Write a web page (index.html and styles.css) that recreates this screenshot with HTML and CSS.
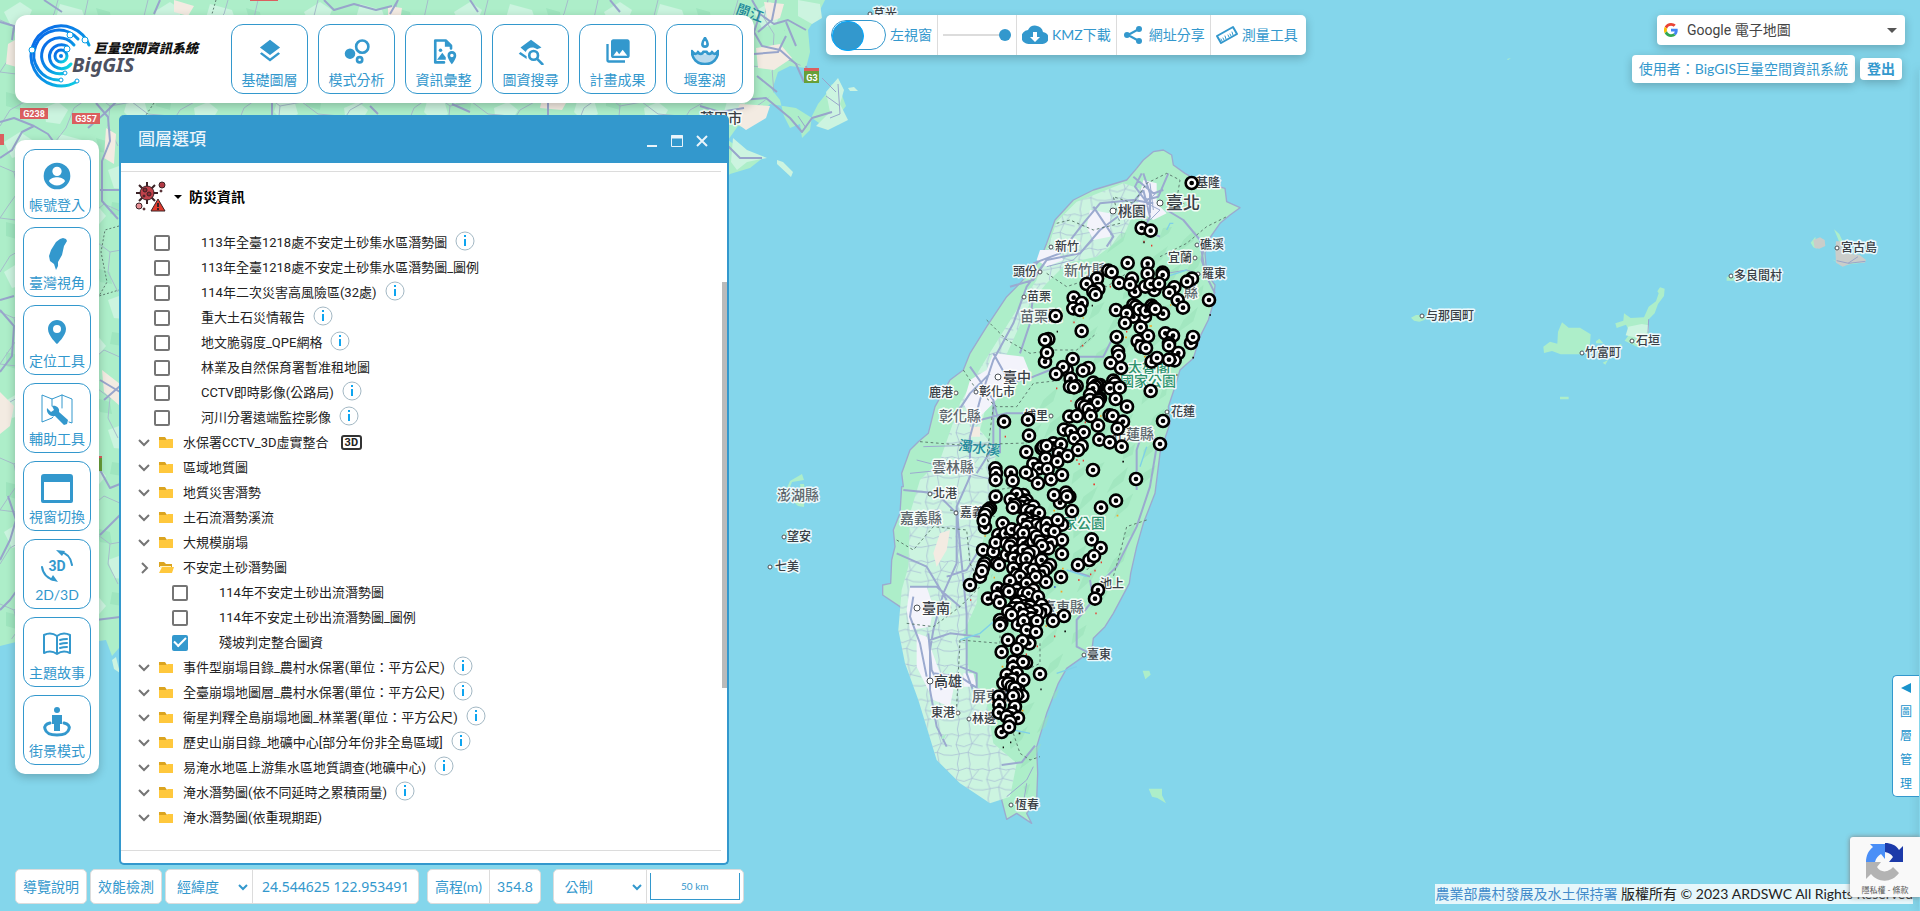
FILE: index.html
```html
<!DOCTYPE html>
<html lang="zh-Hant">
<head>
<meta charset="utf-8">
<meta name="viewport" content="width=device-width, initial-scale=1">
<title>BigGIS 巨量空間資訊系統</title>
<link rel="stylesheet" href="styles.css">
</head>
<body>
<main class="app">
  <svg class="map" viewBox="0 0 1920 911" preserveAspectRatio="xMidYMid slice" role="img" aria-label="電子地圖">
    <defs>
      <pattern id="hills" width="150" height="130" patternUnits="userSpaceOnUse">
        <path class="hill-light" d="M4 12l16-10 12 8-6 14-14 4zM60 4l22 6 4 12-18 6-12-10zM108 40l22-8 14 12-10 16-20-2zM22 62l20-6 8 14-16 12-14-6zM78 78l18-4 10 12-12 14-18-8zM128 98l16 2 4 14-14 8-10-10zM44 108l14-6 10 8-8 14-14-2z"/>
        <path class="hill-dark" d="M34 30l18-6 6 10-14 12zM96 8l14 4 2 12-12-2zM70 48l16-2 4 12-16 4zM6 92l16 4-2 14-14-4zM112 72l14 2-4 12-12-2z"/>
      </pattern>
      <pattern id="minor" width="170" height="146" patternUnits="userSpaceOnUse">
        <path class="road-minor" d="M0 20l14 6 10-8 16 10 8 18 18 4 6 16 20 2 12-10 18 8 14-4 12 8 22-6M40 28l14-14 4-14M66 50l-14 22-18 6-6 22-18 10-10 16M92 68l2 26 16 12-2 20 10 20M142 62l8-20-8-18 6-24M94 94l-20 14-8 20-14 18M0 72l16 2 18 4M110 106l22-4 16 12 22 2M122 66l8 20 2 16M14 26l4 20-10 14-8 12M88 0l-4 18 10 16-2 34"/>
      </pattern>
      <pattern id="lanes" width="92" height="104" patternUnits="userSpaceOnUse">
        <path class="road-minor" d="M0 14l20 6 24-8 26 6 22-4M20 20l-8 26 10 28-6 30M20 20L16 0M52 13l8 30-12 26 6 35M52 13l2-13M12 46l24 6 24-9 32 8M0 78l22-4 26-5 20 8 24 1M60 43l20-25"/>
      </pattern>
      <pattern id="ridge" width="210" height="240" patternUnits="userSpaceOnUse">
        <path class="ridge" d="M10 40l40-26-10 30-36 30zM70 20l34-14-18 34-30 20zM130 60l44-40-14 44-50 36zM40 110l44-32-18 40-46 40zM150 130l40-30-16 40-44 38zM80 160l46-30-24 46-42 30zM10 210l40-30-12 34-28 22zM160 220l36-30-8 34-30 14z"/>
      </pattern>
    </defs>
    <rect class="sea" width="1920" height="911"/>

    <g>
      <path class="land" d="M0 0H825L818 14 808 30 810 52 806 68 790 66 778 72 772 90 780 100 784 116 790 128 800 124 802 138 810 130 812 116 818 104 826 94 832 84 840 90 846 106 838 116 840 124 826 128 812 118 796 108 770 104 756 118 748 128 738 126 728 140 742 150 764 157 750 168 730 174 600 300 400 450 200 600 119 648 112 656 106 640 92 642 60 630 40 636 0 646z"/>
      <path class="fill-hills" d="M0 0H790L780 60 740 110 720 130 400 420 119 620 0 636z"/>
      <path class="fill-minor" d="M0 0H800L806 60 740 126 500 380 119 630 0 640z"/>
      <path class="town" d="M8 44l14-8 8 14-10 18-14-4zM106 128l10 6-2 30-10-6zM0 392l14 14-4 20-10 8zM102 370l18 14v22l-16-14zM740 104l30 2-4 12-20 12-14-10zM756 48l24-4 12 14-18 12-16-2zM764 2l20 2-4 14-12 4zM388 6l14 2-2 14-12-4zM544 90l26 6-8 14-22-2zM174 0l20 6-6 10-14-4z"/>
      <path class="land-light" d="M826 92l12-14 6 12-4 14 8 16-20 10-12-4 14-14zM777 160l6 2 10 10-2 5-14-13zM733 138l14 12 20 8-20 4-10 8-6-8zM848 88l6-1 4 4-8 0zM112 660l4-3 4 16-6-4zM798 0l22 4 2 14-10 6-14-8z"/>
      <g class="road-major">
        <path d="M0 158l12-8 10-18 12-6 14 8 10 14M34 126l-20-8-14 4M96 103l12 14 2 24-8 20 0 40 16 18M88 128l16-14 12-12M100 190l20 0M0 372l12-16 2-30-14-16M0 560l10-20 6-20-8-24M0 300l14-4M100 380l20 12M104 400l16-14M100 470l10 18 10-4M100 535l20-20M96 620l24-3M0 610l10-10 10-14M0 22l14 4-2 14"/>
        <path d="M44 0l18 12M154 14l6-14M324 0l10 10 20-6 22 6 16-4M470 0l8 12M610 0l10 12M390 14l8-14"/>
        <path d="M752 0l8 14 14 10 14-4 18 10M760 14l-6 18 8 14 18 4 16 14 8 18M776 0l-4 20-14 12M786 22l10 24M754 54l24-2 8-16M740 100l26-2 24 20 12 14 10-14 20-6M757 76l20 16M806 66l2 10M728 146l12 12 22 0M700 106l20 6 24-4M370 106l8 8M272 103v12M548 103v12M452 104l18 8"/>
      </g>
      <path class="boundary" d="M216 0l-4 14M154 103l-8 12M119 226l-14 4-4 22 6 30-8 14 20-6"/>
      <g class="road-major thin"><path d="M826 96l14 10M838 84l2 30-10 4M822 78l14 14M798 116l8 12"/></g>
    </g>

    <svg x="860" y="140" width="400" height="720" viewBox="0 0 1200 2160" class="spill">
      <path class="land coast" d="M910 30l25 15 5 30 35 25 35 20 85 25 5 40 40 18-30 22-30 25-35 50-10 40 5 60 25 35-5 55-15 50-25 50-20 65-40 35-15 50-20 60 5 50-30 90-15 120-35 90-20 70-18 80-4 30-48 90-25 40-35 35-3 25-27 30-50 35-25 45-35 90-30 100 3 80-3 80-30 40 15 30-45-30-30 18-15-58 10-40-10-65-40-75-25-35-60-35-60-40-45-50-15-60-25-80-13-60-22-40-52-35v-30l24-5 3-70 10-40-5-50 20-50 5-80 5 0-5-40 25-70 25-25 30-25 20-80 45-80 40-30 20-50 50-80 60-90 40-40 60-70 20-50 25-70 55-60 60-30 100-30 30-35 20-25 30-25z"/>
      <path class="land-light" d="M590 245l60-60 140-55 60 20-30 70-30 70-80 60-90 20-60 60-50 60-60 130-60 130-30 120 50 60-20 120-30 220-10 120-40 90 20 130 50 80 20 120 70 60-20 100-60 20-90-60-70-70-55-180-40-110-20-100 10-120 20-70 5-160 30-100 60-60 60-170 70-120 100-160 60-90z"/>
      <path class="fill-lanes" d="M590 245l60-60 140-55 60 20-30 70-30 70-80 60-90 20-60 60-50 60-60 130-60 130-30 120 50 60-20 120-30 220-10 120-40 90 20 130 50 80 20 120 70 60-20 100-60 20-90-60-70-70-55-180-40-110-20-100 10-120 20-70 5-160 30-100 60-60 60-170 70-120 100-160 60-90z"/>
      <path class="fill-ridge" d="M940 260l90 20 0 160-30 160-80 150-20 170-60 260-80 180-120 170-80 220-60 220-60-180-30-260-20-260 60-300 60-180 100-180 80-200 90-130z"/>
      <path class="urban" d="M850 120l40 10 0 60 30 30-40 20-50-30 10-50zM690 210l60 10 0 70-50 10-20-40zM400 640l90 10 20 50-60 30-50 60-60 60-30-60 20-70 50-30zM150 1340l50 0 20 60-10 60-60 10-10-60zM170 1480l30 10 40 110 40 50-10 50-50-20-50-100zM540 330l50 0 20 30-50 20-30-20zM310 1600l30 0 10 40-40 0z"/>
      <path class="town" d="M240 1180l30-10-10 60-30 50-10-40zM620 1060l20-10 10 20-20 10zM330 860l30 0 0 30-30 0z"/>
      <g class="road-taiwan">
        <path d="M850 150l-50 60-80 60-60 70-100 20-60 80-40 110-60 110-40 120-30 110 0 120-40 90 0 170-40 90-30 110-10 60 0 120 20 110 30 60M880 190l-60-10-100 10-50 60-70 90-80 30M700 200l60 90-20 30M850 150l20 80-20 40 50 20M920 210l50 30 50 60 15 100M400 640l50 90 70-20 50-20 90-40 70 0 30-60M330 680l70 100 20 80 0 80M390 700l-60 60-40 60M400 780l0 140-50 80M520 820l-80 0-80 20M480 640l30-90 10-90M290 1100l10 120 20 200 0 180 30 80M160 1370l-10 60 30 80 20 100M150 1340l80 0 70 60M210 1500l60-20 90 10M870 860l20 60-20 120-40 120-60 120-60 60M690 1320l10 60-50 60 0 80 40 20M850 100l20 60 0 60M820 110l60 50 30-10M780 210l50 0 40-20M630 1290l60 20M130 1050l100 10 60 60M110 1240l90 40 60 100M205 1480l10 110 30 60M260 1310l60-20 50-80M300 1580l50 20 0 60M220 1600l80 10 60 40M450 440l70-20 40-60M850 870l-20 60 0 120M425 1875l60-8 40-50M1035 300l-10 60 20 60 20 40M845 100l-20 40 30 40 40-10 30-70"/>
        <path class="faint" d="M510 980l60-40 90-20M560 380l80-20 60-60M920 400l60-10 60 20M520 1880l-20 40-60 50M500 1930l-10 60M190 920l210-6M170 960l230 60M150 1000l100-10M860 190l40 20-30 30-40-10M840 200l60-50M870 130l10 80"/>
      </g>
      <path class="boundary taiwan" d="M590 250l40-10 70 30 80-20-20-80 60 20 40-60 60-30 40 20-10 60 40 20M900 350l80-40 60-50 60-30M560 400l60 40 60-20 60 20 60-40M380 540l60 60 70 40 70-10 70 0 60-50M310 690l40 60 60 50 60 0 50-70 90-10M180 905l120 10 200-6M400 800l-20 150 30 100 60-10 0 60M270 1110l60 10 80 10M110 1200l50 30 60-70 100 10 10 100 30 60M140 1450l80 10 80-60 60-60M290 1700l10-200 120 10 0-30M860 1140l-60 20-20 80-20 70M540 1510l0 60-40 20M460 1780l20 60 30 20 30-10M680 1290l20-20 0-30"/>
      <path class="stream" d="M920 270l10-20 10 0M300 1500l60-20 70-60M620 1290l60 20M590 1600l60-20M840 980l20-60M920 410l60-20M460 1770l50 10"/>
      <path class="land" d="M848 1592h20l4 12-16 14zM866 1946h40v20l12 24-26-16-16-4zM244 1790l14-8-4 12-8 4z"/>
      <path class="spot-red" d="M850 305h4M873 317h4M749 440h4M640 547h4M666 617h4M588 745h4M631 783h4M674 847h4M434 890h4M648 960h5M655 972h5M668 962h4M700 1033h5M389 1135h3M636 1157h4M722 1267h4M703 1292h4M654 1320h5M706 1420h4M582 1489h4M530 1519h4M330 1380h4M497 1543h4M798 575h4M997 170h4M690 1303h4"/>
      <path class="spot-yellow" d="M868 558h8M852 650h5M795 592h6M668 534h4M720 828h5M770 1127h5M425 1580h5M556 1458h5M602 1355h5M373 1188h5M401 1313h4M606 1286h5M930 495h4M485 1712h5M580 1112h5"/>
      <path class="spot-blue" d="M724 1149h5M582 1341h5"/>
      <path class="spot-black" d="M590 575h4M787 965h5M1048 525h5M997 653h5M948 705h4M541 1648h4M476 1780h5M450 1807h4M428 1822h4M613 1474h5M850 307h4M695 497h4"/>
    </svg>

    <svg x="1380" y="200" width="520" height="200" viewBox="0 0 1560 600" class="spill">
      <path class="land" d="M93 353l15-8h24l4 14-18 6-16-3zM490 440l20-15 22 6 2-36 12-28 20 16 34 0 32 20-2 28-28 32-60 0-26-10-24 6zM840 262l14 4-2 22-18 24-10 28-20 20 0 28 4 34-34 20-40-20 16-22-12-26-28 10-4-14 24-8 2-22 20 14 40-2 14-32 22-16 8-24-4-6zM648 424l10-8 12 14-22 0zM668 488l16-8-8 14zM1040 232l20-12 6 22-26 0zM1362 88l16 14 10 22-10 2zM1292 128l14-18 4 36-10-4zM540 590h26v8h-26zM1356 178l14 6 80 0 10-8-14 12-60 8zM718 432h6v6h-6z"/>
      <path class="land-light" d="M745 380l40-8 22 4 0 18-34 20-36-8z"/>
      <path class="island-urban" d="M1300 120l20-8 14 8 2 18-18 8-14-2zM1368 124l16 0 4 36 50 4 20 16-4 8-36 0-30 12-20-12-2-40z"/>
      <path class="road-major wide3" d="M1370 182l36 8 50-6M1404 190l30-20M806 358l-2 40"/>
    </svg>

    <path class="land" d="M786 490l4-9 12-7 2 6-12 2-4 10zM800 484l4 0 2 14-4-2zM792 500h12l0 7-6-1zM783 534l4-1-2 3zM1507 59l4-1-3 2z"/>

    <g class="places" id="places"></g>
    <g class="shields">
      <g class="shield-red"><rect x="20" y="108" width="28" height="11"/><rect x="72" y="113" width="28" height="11"/><rect x="-10" y="134" width="14" height="11"/><rect x="250" y="-8" width="28" height="9"/><rect x="804" y="68" width="15" height="4"/><rect x="96" y="456" width="6" height="6"/></g>
      <g class="shield-green"><rect x="804" y="71" width="15" height="12"/><rect x="96" y="458" width="6" height="13"/></g>
      <text x="34" y="117">G238</text><text x="86" y="122">G357</text><text x="812" y="81">G3</text>
    </g>
    <svg x="860" y="140" width="400" height="720" viewBox="0 0 1200 2160" class="spill" id="markers"></svg>
  </svg>

  <header class="topbar card">
    <a class="logo" href="#" aria-label="BigGIS 巨量空間資訊系統">
      <svg width="180" height="68" viewBox="0 0 180 68">
        <defs><linearGradient id="ring" x1="0" y1="0" x2="1" y2="1"><stop offset="0" stop-color="#0a63e8"/><stop offset=".55" stop-color="#0a8fe6"/><stop offset="1" stop-color="#0fe6e0"/></linearGradient></defs>
        <g fill="none" stroke="url(#ring)" stroke-width="3" stroke-linecap="round">
          <path d="M61 24A30 30 0 1 0 48 61"/>
          <path d="M50 18A25 25 0 1 0 33 59"/>
          <path d="M46 24A18 18 0 1 0 37 52"/>
          <path d="M39 25A12 12 0 1 0 43 43"/>
          <circle cx="33" cy="35" r="6"/>
        </g>
        <circle cx="33" cy="35" r="2" fill="#0a7fe6"/>
        <g fill="#fff" stroke="#0a9fe6" stroke-width="1"><circle cx="42" cy="14" r="3"/><circle cx="57" cy="19" r="3"/><circle cx="4" cy="29" r="3"/><circle cx="39" cy="28" r="3"/><circle cx="37" cy="52" r="2"/><circle cx="33" cy="59" r="2"/><circle cx="49" cy="60" r="2"/></g>
        <text class="logo-cjk" x="66" y="32">巨量空間資訊系統</text>
        <text class="logo-latin" x="44" y="51">BigGIS</text>
      </svg>
    </a>
    <nav class="topnav" aria-label="主功能">
      <button class="tool"><svg class="icon" viewBox="0 0 32 32"><path d="M16 3 4.500 12 16 20.500 27.500 12zM16 24.500 6.500 17.300 4.500 19 16 28 27.500 19 25.500 17.300z"/></svg><span>基礎圖層</span></button>
      <button class="tool"><svg class="icon" viewBox="0 0 32 32"><circle cx="8" cy="19" r="6"/><g class="line w3"><circle cx="22" cy="11" r="7"/><circle cx="19" cy="26" r="3"/></g></svg><span>模式分析</span></button>
      <button class="tool"><svg class="icon" viewBox="0 0 32 32"><path class="line w3" d="M16 29H6V4h12l6 6v3"/><path d="M17 4v7h7zM8 26l6-8 4 5v3z"/><circle cx="12" cy="15" r="2"/><path d="M25 16c-3 0-5 2-5 5 0 4 5 10 5 10s5-6 5-10c0-3-2-5-5-5zm0 7a2 2 0 1 1 0-4 2 2 0 0 1 0 4z"/></svg><span>資訊彙整</span></button>
      <button class="tool"><svg class="icon" viewBox="0 0 32 32"><path d="M16 3 4 12l6 5c2-5 8-7 13-3l5-2zM4 17l7 5v3l-9-6z"/><circle class="line w3" cx="19" cy="21" r="5"/><path class="line w3" d="m23 25 6 6"/></svg><span>圖資搜尋</span></button>
      <button class="tool"><svg class="icon" viewBox="0 0 24 24"><path d="M22 16V4c0-1.100-.9-2-2-2H8c-1.100 0-2 .9-2 2v12c0 1.100.9 2 2 2h12c1.100 0 2-.9 2-2zm-11-4 2 2.700L16 11l4 5H8l3-4zM2 6v14c0 1.100.9 2 2 2h14v-2H4V6H2z"/></svg><span>計畫成果</span></button>
      <button class="tool"><svg class="icon" viewBox="0 0 32 32"><path class="soft" d="M2 19l5 1 4-2 5 2 5-2 4 2 5-1c0 6-5 12-14 12S2 25 2 19z"/><path class="line w3" d="M1 16c0 9 6 15 15 15s15-6 15-15M2 17c2 3 5 3 6 0 1 3 5 3 6 0h4c1 3 5 3 6 0 1 3 4 3 6 0"/><path class="line w3" d="M16 1c-2 3-3 5-3 7a3 3 0 0 0 6 0c0-2-1-4-3-7z"/></svg><span>堰塞湖</span></button>
    </nav>
  </header>

  <nav class="sidebar card" aria-label="工具列">
    <button class="tool"><svg class="icon" viewBox="0 0 24 24"><path d="M12 2a10 10 0 1 0 0 20 10 10 0 0 0 0-20zm0 3a3.500 3.500 0 1 1 0 7 3.500 3.500 0 0 1 0-7zm0 14.200c-2.500 0-4.700-1.300-6-3.200 0-2 4-3.100 6-3.100s6 1.100 6 3.100c-1.300 1.900-3.500 3.200-6 3.200z"/></svg><span>帳號登入</span></button>
    <button class="tool"><svg class="icon" viewBox="0 0 32 32"><path d="M22 0l3 1 1 2-3 5-2 9-4 7 0 4-2 4-2-6-4-3-1-5 2-6 5-8 4-3z"/></svg><span>臺灣視角</span></button>
    <button class="tool"><svg class="icon" viewBox="0 0 32 32"><path d="M16 4c-5 0-9 4-9 9 0 7 9 15 9 15s9-8 9-15c0-5-4-9-9-9zm0 13a4 4 0 1 1 0-8 4 4 0 0 1 0 8z"/></svg><span>定位工具</span></button>
    <button class="tool"><svg class="icon" viewBox="0 0 32 32"><path class="line" d="M12 23l-1 1-10 4V1l10 4 10-4 10 4v24l-3-1M11 5v7M21 1v13"/><path d="M6 14l4 4 3-2-2-4c4-1 8 2 7 6l9 8-1 4-3 1-9-9c-5 1-9-3-8-8z"/></svg><span>輔助工具</span></button>
    <button class="tool"><svg class="icon" viewBox="0 0 32 32"><path d="M3 2h26a3 3 0 0 1 3 3v24a2 2 0 0 1-2 2H2a2 2 0 0 1-2-2V5a3 3 0 0 1 3-3zm0 8v18h26V10z"/></svg><span>視窗切換</span></button>
    <button class="tool"><svg class="icon" viewBox="0 0 32 32"><path class="line w2" d="M19 2c7 1 11 6 12 13M1 17c1 7 6 12 13 13"/><path d="M15 0l9 1-3 5zM17 32l-8-2 3-5z"/><text class="icon-text" x="16" y="21">3D</text></svg><span>2D/3D</span></button>
    <button class="tool"><svg class="icon" viewBox="0 0 32 32"><path class="line w2" d="M16 8C12 5 7 5 3 7v18c4-2 9-2 13 1 4-3 9-3 13-1V7c-4-2-9-2-13 1zM16 8v18M19 12c3-1 5-1 7-1M19 16c3-1 5-1 7-1M19 20c3-1 5-1 7-1"/></svg><span>主題故事</span></button>
    <button class="tool"><svg class="icon" viewBox="0 0 32 32"><circle cx="16" cy="4" r="3"/><path d="M11 9h10v9h-2v7h-6v-7h-2z"/><path class="line w3" d="M9 17c-4 1-6 3-5 6 1 4 6 6 12 6s11-2 12-6c1-3-1-5-5-6"/></svg><span>街景模式</span></button>
  </nav>

  <div class="viewbar card">
    <label class="viewbar-cell switch"><input type="checkbox"><span>左視窗</span></label>
    <div class="viewbar-cell range"><input type="range" min="0" max="100" value="100" aria-label="透明度"></div>
    <button class="viewbar-cell"><svg width="26" height="26" viewBox="0 0 26 26"><path d="M21 10A8 8 0 0 0 6 8a7 7 0 0 0 1 14h13a6 6 0 0 0 1-12zm-8 10-5-5h3v-5h4v5h3z"/></svg><span>KMZ下載</span></button>
    <button class="viewbar-cell"><svg class="share" width="20" height="20" viewBox="0 0 20 20"><path class="line w2" d="M16 4 5 10l11 6"/><circle cx="16" cy="4" r="3"/><circle cx="4" cy="10" r="3"/><circle cx="16" cy="16" r="3"/></svg><span>網址分享</span></button>
    <button class="viewbar-cell"><svg width="22" height="22" viewBox="0 0 22 22"><path class="line w2" d="M1 12 17 3l4 7-16 9z"/><path class="line" d="M6 17l-1-2M8 16l-1-2M10 15l-1-3M13 13l-1-2M15 12l-1-2M17 11l-1-3"/></svg><span>測量工具</span></button>
  </div>

  <div class="corner">
    <label class="basemap card">
      <svg width="14" height="14" viewBox="0 0 48 48"><path fill="#ea4335" d="M24 9.500c3.500 0 6.700 1.200 9.200 3.600l6.900-6.900C35.900 2.400 30.500 0 24 0 14.600 0 6.500 5.400 2.600 13.200l8 6.200C12.400 13.700 17.700 9.500 24 9.500z"/><path fill="#4285f4" d="M47 24.600c0-1.600-.2-3.100-.4-4.600H24v9h12.900c-.6 3-2.300 5.500-4.800 7.200l7.700 6C44.400 38 47 32 47 24.600z"/><path fill="#fbbc05" d="M10.500 28.600a14.500 14.500 0 0 1 0-9.200l-8-6.200a24 24 0 0 0 0 21.600z"/><path fill="#34a853" d="M24 48c6.500 0 11.900-2.100 15.900-5.800l-7.700-6c-2.200 1.500-4.900 2.300-8.200 2.300-6.300 0-11.600-4.200-13.500-9.900l-8 6.200C6.500 42.600 14.600 48 24 48z"/></svg>
      <select aria-label="底圖"><option>Google 電子地圖</option></select>
      <svg class="caret" width="10" height="5" viewBox="0 0 10 5"><path d="M0 0h10L5 5z"/></svg>
    </label>
    <div class="user">
      <span class="user-name card">使用者：BigGIS巨量空間資訊系統</span>
      <button class="logout card">登出</button>
    </div>
  </div>

  <section class="window" aria-labelledby="win-title">
    <header class="window-head">
      <h1 id="win-title">圖層選項</h1>
      <div class="window-controls">
        <button aria-label="最小化"><svg width="12" height="14" viewBox="0 0 12 14"><path d="M1 12h10" stroke-width="2"/></svg></button>
        <button aria-label="最大化"><svg width="12" height="14" viewBox="0 0 12 14"><path d="M.5 1.500h11v11H.5zM0 3h12" /><path d="M0 3h12" stroke-width="3"/></svg></button>
        <button aria-label="關閉"><svg width="12" height="14" viewBox="0 0 12 14"><path d="M1 2l10 10M11 2 1 12" stroke-width="2"/></svg></button>
      </div>
    </header>
    <div class="window-body">
      <div class="layer-group">
        <h2 class="group-title">
          <svg width="32" height="32" viewBox="0 0 32 32"><g stroke="#3a2226" stroke-width="1"><path d="M12 1v22M1 12h22M4 4l16 16M20 4 4 20" stroke-width="2"/><circle cx="12" cy="12" r="7" fill="#c0424b"/><circle cx="10" cy="9" r="2" fill="#8c2b34"/><circle cx="14" cy="13" r="2" fill="#8c2b34"/><circle cx="9" cy="15" r="1" fill="#8c2b34"/><circle cx="27" cy="4" r="3" fill="#b23a44"/><circle cx="26" cy="10" r="1" fill="#b23a44"/><circle cx="4" cy="25" r="3" fill="#e88f95"/><circle cx="9" cy="28" r="1" fill="#b23a44"/><path d="M23 18l7 12H16z" fill="#e03a2c"/></g><path d="M23 22v4M23 27v2" stroke="#3a2226" stroke-width="2"/></svg>
          <svg class="caret" width="8" height="4" viewBox="0 0 8 4"><path d="M0 0h8L4 4z"/></svg>
          <span>防災資訊</span>
        </h2>
        <ul class="layers" id="layers"></ul>
      </div>
    </div>
    <div class="window-scroll"></div>
  </section>

  <footer class="statusbar">
    <button class="pill">導覽說明</button>
    <button class="pill">效能檢測</button>
    <div class="pill joined coords">
      <span class="picker"><select aria-label="座標系統"><option>經緯度</option></select><svg width="10" height="7" viewBox="0 0 10 7"><path d="M1 1l4 4 4-4"/></svg></span>
      <input class="coord" type="text" value="24.544625 122.953491" aria-label="座標">
    </div>
    <div class="pill joined height"><span>高程(m)</span><output>354.8</output></div>
    <div class="pill joined units">
      <span class="picker"><select aria-label="單位"><option>公制</option></select><svg width="10" height="7" viewBox="0 0 10 7"><path d="M1 1l4 4 4-4"/></svg></span>
      <span class="scale-box"><span class="scale">50 km</span></span>
    </div>
  </footer>

  <p class="credit"><a href="#">農業部農村發展及水土保持署</a> 版權所有 © 2023 ARDSWC All Rights Reserved</p>

  <div class="edge"></div>
  <button class="edge-tab"><svg width="10" height="10" viewBox="0 0 10 10"><path d="M0 5l10-5v10z"/></svg><span>圖</span><span>層</span><span>管</span><span>理</span></button>

  <aside class="recaptcha">
    <svg width="38" height="38" viewBox="0 0 38 38"><path fill="#1c3aa9" d="M19 0c6 0 11 2 14 7l4-4v16H23l4-5c-2-3-4-4-8-5z"/><path fill="#4a8ff7" d="M0 19C0 12 3 7 7 4L4 1h15v15l-4-5c-3 2-5 4-6 8z"/><path fill="#b3b3b3" d="M0 19h15l-4 5c2 4 8 6 12 3 1 0 3-2 4-3l6 6c-7 10-21 10-28 1l-5 5z"/></svg>
    <span><a href="#">隱私權</a> - <a href="#">條款</a></span>
  </aside>
</main>
<script src="app.js"></script>
</body>
</html>
```

FILE: styles.css
```css
:root {
  --blue: #3398cd;
  --line: #dcdcdc;
  --ui: Lato, "Noto Sans CJK TC", sans-serif;
  --list: Roboto, "Noto Sans CJK TC", sans-serif;
}

* { box-sizing: border-box; }

body {
  margin: 0;
  font: 14px/20px var(--ui);
  color: #222;
}

button, input, select { font: inherit; color: inherit; }
button { border: 0; background: none; padding: 0; cursor: pointer; }
a { text-decoration: none; }
svg { flex: none; }

.app {
  position: relative;
  height: 100vh;
  overflow: hidden;
  background: #84d6eb;
}

.card {
  background: #fff;
  box-shadow: 0 3px 10px rgba(0, 0, 0, .22);
}

/* Map */
.map { display: block; width: 100%; height: 100%; }
.spill { overflow: visible; }
.sea { fill: #84d6eb; }
.land { fill: #adeec9; }
.coast { stroke: #9baacf; stroke-width: 4; stroke-linejoin: round; }
.land-light { fill: #ccf4e0; }
.fill-hills { fill: url(#hills); }
.fill-minor { fill: url(#minor); }
.fill-lanes { fill: url(#lanes); }
.fill-ridge { fill: url(#ridge); }
.hill-light { fill: #cbf4df; }
.hill-dark { fill: #9fe6bf; }
.ridge { fill: #98dfb8; fill-opacity: .5; }
.town { fill: #f3ebe2; }
.urban { fill: #f3f3fb; }
.island-urban { fill: #cacdca; }
.road-minor { fill: none; stroke: #a5bccb; stroke-width: 1; }
#lanes .road-minor { stroke: #a3b4d2; stroke-width: 2; }
.road-major { fill: none; stroke: #98a5cb; stroke-width: 2; stroke-linejoin: round; }
.road-major.thin { stroke-width: 1; }
.road-major.wide3 { stroke-width: 3; }
.road-taiwan { fill: none; stroke: #9baacf; stroke-width: 6; stroke-linejoin: round; }
.road-taiwan .faint { stroke-width: 3; }
.boundary { fill: none; stroke: #5f7f72; stroke-width: 1; stroke-dasharray: 2 2; }
.boundary.taiwan { stroke-width: 3; stroke-dasharray: 8 8; }
.stream { fill: none; stroke: #7fd0e8; stroke-width: 4; }
.spot-red, .spot-yellow, .spot-blue, .spot-black { stroke-width: 5; }
.spot-red { stroke: #e83b2c; }
.spot-yellow { stroke: #f5a623; }
.spot-blue { stroke: #2b62e0; }
.spot-black { stroke: #111; }

.places text {
  font-family: Roboto, "Noto Sans CJK TC", sans-serif;
  font-weight: 500;
  fill: #3a4046;
  stroke: #fff;
  stroke-opacity: .85;
  stroke-width: 3;
  stroke-linejoin: round;
  paint-order: stroke;
}
.places .s12 { font-size: 12px; }
.places .s14 { font-size: 14px; }
.places .s17 { font-size: 17px; }
.places .county { fill: #5d666c; }
.places .park { fill: #2f9470; }
.places .river { fill: #1f8a9c; stroke: none; }
.places circle { fill: #fff; stroke: #4a5055; stroke-width: 1; }
.shield-red { fill: #db5f5f; }
.shield-green { fill: #689f38; }
.shields text { font: bold 9px Roboto, sans-serif; fill: #fff; text-anchor: middle; }
.mark-outer { fill: #fff; stroke: #000; stroke-width: 8; }
.mark-dot { fill: #000; }

/* Top bar */
.topbar {
  position: absolute;
  left: 15px;
  top: 15px;
  display: flex;
  padding: 9px 11px 9px 13px;
  border-radius: 12px;
}
.logo { width: 203px; }
.logo svg { display: block; margin-top: -3px; }
.logo-cjk { font: italic 900 13px "Noto Sans CJK TC", sans-serif; fill: #111; }
.logo-latin { font: italic bold 20px "Noto Sans", sans-serif; fill: #4d5160; }
.topnav { display: flex; gap: 10px; }
.topnav .tool { width: 77px; }

.tool {
  display: flex;
  flex-direction: column;
  align-items: center;
  gap: 3px;
  padding: 10px 0 3px;
  border: 1px solid var(--blue);
  border-radius: 12px;
  color: var(--blue);
  background: #fff;
}
.icon { width: 32px; height: 32px; fill: var(--blue); }
.topnav .icon { width: 28px; height: 28px; margin: 2px; }
.line { fill: none; stroke: var(--blue); stroke-width: 1; stroke-linecap: round; stroke-linejoin: round; }
.w2 { stroke-width: 2; }
.w3 { stroke-width: 3; }
.soft { fill: #b8daee; }
.icon-text { font: bold 14px Roboto, sans-serif; text-anchor: middle; }

.sidebar {
  position: absolute;
  left: 15px;
  top: 140px;
  display: flex;
  flex-direction: column;
  gap: 8px;
  width: 84px;
  padding: 9px 8px;
  border-radius: 10px;
}

/* View tools */
.viewbar {
  position: absolute;
  left: 826px;
  top: 15px;
  display: flex;
  height: 40px;
  border-radius: 5px;
  color: var(--blue);
}
.viewbar svg { fill: var(--blue); }
.viewbar .line { fill: none; }
.viewbar-cell {
  display: flex;
  align-items: center;
  gap: 4px;
  padding: 0 5px;
  color: var(--blue);
}
.viewbar-cell + .viewbar-cell { border-left: 1px solid var(--line); }
.viewbar-cell:last-child { padding-right: 8px; }
.share { margin: 0 2px 0 1px; }
.switch input {
  appearance: none;
  display: flex;
  width: 55px;
  height: 30px;
  margin: 0;
  border: 1px solid var(--blue);
  border-radius: 15px;
  background: #fff;
}
.switch input::before {
  content: "";
  width: 30px;
  height: 28px;
  border: 1px solid #00a8ff;
  border-radius: 15px;
  background: var(--blue);
}
.range input {
  appearance: none;
  width: 68px;
  height: 12px;
  margin: 0;
  background: linear-gradient(#dcdcdc, #dcdcdc) center / 100% 2px no-repeat;
}
.range input::-webkit-slider-thumb {
  appearance: none;
  width: 12px;
  height: 12px;
  border-radius: 50%;
  background: var(--blue);
}

.corner {
  position: absolute;
  right: 15px;
  top: 15px;
  display: flex;
  flex-direction: column;
  align-items: flex-end;
  gap: 10px;
}
.basemap {
  display: flex;
  align-items: center;
  gap: 9px;
  width: 248px;
  height: 30px;
  padding: 0 8px 0 7px;
  border-radius: 4px;
  color: #444;
}
.basemap select {
  appearance: none;
  flex: 1;
  border: 0;
  padding: 0;
  background: none;
  font-family: Roboto, "Noto Sans CJK TC", sans-serif;
}
.basemap .caret { fill: #555; }
.user { display: flex; align-items: center; gap: 5px; padding-right: 3px; color: var(--blue); }
.user-name { padding: 4px 7px; border-radius: 4px; }
.logout { padding: 1px 7px; border-radius: 4px; font-weight: bold; color: var(--blue); }

/* Layer window */
.window {
  position: absolute;
  left: 119px;
  top: 115px;
  width: 610px;
  border: 2px solid var(--blue);
  border-top: 0;
  border-radius: 5px;
  background: #fff;
  font-family: var(--list);
}
.window-head {
  display: flex;
  align-items: center;
  justify-content: space-between;
  height: 48px;
  padding: 0 19px 0 17px;
  border-radius: 3px 3px 0 0;
  background: var(--blue);
  color: #eaf4fa;
}
.window-head h1 { margin: 0; font-size: 17px; font-weight: 500; }
.window-controls { display: flex; gap: 13px; padding-top: 3px; }
.window-controls svg { display: block; fill: none; stroke: #eaf4fa; }
.window-body { padding: 8px 6px 12px 0; }
.layer-group {
  padding: 9px 0 20px;
  border-top: 1px solid var(--line);
  border-bottom: 1px solid var(--line);
}
.group-title {
  display: flex;
  align-items: center;
  gap: 7px;
  margin: 0 0 17px;
  padding-left: 14px;
  font-size: 14px;
  font-weight: 700;
  color: #000;
}
.layers { margin: 0; padding: 0; list-style: none; font-size: 13px; }
.layer { display: flex; align-items: center; height: 25px; }
.layer label { display: flex; align-items: center; gap: 31px; padding-left: 33px; }
.layer.nested label { padding-left: 51px; }
.layer input {
  appearance: none;
  display: grid;
  place-items: center;
  width: 16px;
  height: 16px;
  margin: 0;
  border: 2px solid #757575;
  border-radius: 2px;
}
.layer input:checked { border-color: var(--blue); background: var(--blue); }
.layer input:checked::before {
  content: "";
  width: 10px;
  height: 5px;
  margin-bottom: 4px;
  border: solid #fff;
  border-width: 0 0 2px 2px;
  transform: rotate(-45deg);
}
.folder { display: flex; align-items: center; padding-left: 17px; font-size: 13px; }
.folder .chevron { fill: none; stroke: #757575; stroke-width: 2; }
.folder .folder-icon { margin: 0 9px 0 8px; }
.info { margin: 0 0 4px 8px; }
.info svg { display: block; }
.info circle { fill: #fff; stroke: #a3b8c4; }
.info path { stroke: #0ea5f0; stroke-width: 2; }
.badge {
  margin-left: 12px;
  padding: 0 2px;
  border: 2px solid #333;
  border-radius: 3px;
  font-size: 11px;
  font-weight: 700;
  line-height: 11px;
}
.window-scroll {
  position: absolute;
  right: 0;
  top: 167px;
  width: 5px;
  height: 406px;
  background: #bababa;
}

/* Status bar */
.statusbar {
  position: absolute;
  left: 15px;
  bottom: 7px;
  display: flex;
  gap: 3px;
  color: var(--blue);
}
.pill {
  height: 35px;
  padding: 0 7px;
  border: 1px solid var(--line);
  border-radius: 5px;
  background: #fff;
  color: var(--blue);
}
.joined { display: flex; align-items: stretch; padding: 0; overflow: hidden; }
.picker { display: flex; align-items: center; position: relative; }
.picker select { appearance: none; height: 33px; border: 0; padding: 0 0 0 11px; background: none; }
.picker svg { position: absolute; right: 4px; top: 14px; fill: none; stroke: var(--blue); stroke-width: 2; pointer-events: none; }
.coords .picker, .coords select { width: 86px; }
.coord { width: 166px; border: 0; padding: 0 9px; font-family: "Noto Sans", sans-serif; background: none; }
.joined > * + * { border-left: 1px solid var(--line); }
.height { margin-left: 5px; line-height: 33px; }
.height > * { padding: 0 7px; }
.units { margin-left: 9px; }
.units .picker, .units select { width: 92px; }
.scale-box { padding: 3px; width: 97px; }
.scale {
  display: block;
  height: 27px;
  border: 1px solid var(--blue);
  border-top: 0;
  font-size: 10px;
  line-height: 27px;
  text-align: center;
}

.credit {
  position: absolute;
  right: 7px;
  bottom: 7px;
  margin: 0;
  background: rgba(255, 255, 255, .8);
  color: #222;
}
.credit a { color: #428bca; }

.edge {
  position: absolute;
  right: 0;
  top: 70px;
  bottom: 0;
  width: 1px;
  background: #84d6eb;
  box-shadow: 0 0 8px rgba(0, 0, 0, .5);
}
.edge-tab {
  position: absolute;
  right: 1px;
  top: 675px;
  display: flex;
  flex-direction: column;
  align-items: center;
  gap: 4px;
  width: 27px;
  padding: 7px 0 2px;
  border: 1px solid var(--blue);
  border-right: 0;
  border-radius: 5px 0 0 5px;
  background: #fff;
  color: #1a93cc;
  font-size: 12px;
}
.edge-tab svg { margin-bottom: 5px; fill: #1a93cc; }

.recaptcha {
  position: absolute;
  right: 0;
  bottom: 14px;
  display: flex;
  flex-direction: column;
  align-items: center;
  gap: 3px;
  width: 70px;
  height: 60px;
  padding-top: 6px;
  border-radius: 3px 0 0 3px;
  background: #f9f9f9;
  box-shadow: 0 0 5px #808080;
  font-size: 8px;
  line-height: 12px;
  color: #555;
}
.recaptcha a { color: inherit; }
```

FILE: app.js
```js
const SVG = "http://www.w3.org/2000/svg";

function node(parent, name, attrs, text) {
  const el = document.createElementNS(SVG, name);
  for (const key in attrs) el.setAttribute(key, attrs[key]);
  if (text) el.textContent = text;
  parent.appendChild(el);
  return el;
}

// name, text x, centre y, size, kind, dot x
const places = [
  ["臺北", 1166, 203, 17, "", 1160], ["桃園", 1118, 211, 14, "", 1113], ["基隆", 1196, 183, 12, "", 0],
  ["新竹", 1055, 247, 12, "", 1051], ["頭份", 1013, 272, 12, "", 1040], ["新竹縣", 1064, 270, 14, "county", 0],
  ["苗栗", 1027, 297, 12, "", 1024], ["苗栗縣", 1020, 316, 14, "county", 0], ["礁溪", 1200, 245, 12, "", 1197],
  ["宜蘭", 1168, 258, 12, "", 1195], ["羅東", 1202, 274, 12, "", 1198], ["縣", 1184, 292, 14, "county", 0],
  ["太魯閣", 1128, 367, 14, "park", 0], ["國家公園", 1120, 381, 14, "park", 0], ["臺中", 1003, 377, 14, "", 998],
  ["鹿港", 929, 393, 12, "", 956], ["彰化市", 979, 392, 12, "", 976], ["彰化縣", 939, 416, 14, "county", 0],
  ["埔里", 1024, 416, 12, "", 1051], ["花蓮", 1171, 412, 12, "", 1167], ["花蓮縣", 1112, 434, 14, "county", 0],
  ["雲林縣", 932, 467, 14, "county", 0], ["北港", 933, 494, 12, "", 930], ["嘉義縣", 900, 518, 14, "county", 0],
  ["嘉義", 960, 513, 12, "", 956], ["國家公園", 1049, 523, 14, "park", 0], ["池上", 1100, 584, 12, "", 0],
  ["臺南", 922, 608, 14, "", 917], ["臺東縣", 1042, 607, 14, "county", 0], ["臺東", 1087, 655, 12, "", 1084],
  ["高雄", 934, 681, 14, "", 930], ["屏東縣", 972, 696, 14, "county", 0], ["東港", 931, 713, 12, "", 958],
  ["林邊", 972, 719, 12, "", 969], ["恆春", 1015, 805, 12, "", 1011], ["澎湖縣", 777, 495, 14, "county", 0],
  ["望安", 787, 537, 12, "", 784], ["七美", 775, 567, 12, "", 770], ["莆田市", 700, 118, 14, "", 0],
  ["莒光", 873, 14, 12, "", 870], ["与那国町", 1426, 316, 12, "", 1422], ["竹富町", 1585, 353, 12, "", 1582],
  ["石垣", 1636, 341, 12, "", 1632], ["多良間村", 1734, 276, 12, "", 1731], ["宮古島", 1841, 248, 12, "", 1837]
];
const placeLayer = document.getElementById("places");
for (const [name, x, y, size, kind, dot] of places) {
  if (dot) node(placeLayer, "circle", { cx: dot, cy: y, r: size > 12 ? 3 : 2 });
  node(placeLayer, "text", { x, y: y + Math.round(size * 0.37), class: "s" + size + " " + kind }, name);
}
node(placeLayer, "text", { x: 958, y: 450, class: "s14 river", transform: "rotate(8 958 450)" }, "濁水溪");
node(placeLayer, "text", { x: 735, y: 13, class: "s14 river", transform: "rotate(20 735 13)" }, "閩江");

// Site markers, in thirds of a map unit from the north-west corner of the island sheet
const north = "995,129 845,264 872,272 803,369 863,371 745,392 755,396 711,416 680,432 715,447 700,455 707,464 777,429 816,416 825,455 810,434 863,401 908,398 908,405 883,450 856,440 872,432 897,431 943,442 928,458 996,416 981,425 1047,480 953,480 969,503 641,473 665,489 640,505 660,510 587,528 665,573 768,510 820,495 828,500 820,530 803,515 800,520 795,549 855,530 838,508 858,512 909,521 875,497 880,503 886,507 842,562 864,588 770,591 833,603 843,620 858,624 916,580 939,587 927,610 927,617 993,609 999,591 955,639 944,661 875,665 891,654 927,659 565,597 555,600 555,665 561,638 774,634 776,648 752,669 783,684 638,657 620,690 609,681 588,702 685,684 669,692 632,716 630,740 650,738 642,742 720,735 700,728 712,735 706,740 699,745 760,722 765,730 750,745 779,743 872,753 767,777 801,800 690,765 700,800 670,790 665,795 690,780 720,775 716,780 713,788 675,800 686,808 628,830 651,828 692,828 749,826 758,828 714,857 789,845 773,866 909,843 900,912 432,845 504,839 507,887 499,936 612,869 633,874 671,877 643,895 718,899 749,907 785,920 545,925 580,910 550,920 560,918 603,913 665,918 654,930 597,940 623,948 557,955 592,965 520,972 537,985 563,987 406,985 408,1000 407,1020 453,998 458,1022 515,1005 498,998 534,1030 573,1018 606,1005 699,990 828,1017";
const south = "407,50 490,45 500,62 470,42 452,58 600,68 582,45 618,38 628,50 621,50 636,93 723,83 768,62 490,68 505,78 480,80 465,75 459,83 520,80 500,90 515,95 537,99 390,85 385,90 380,95 375,105 375,142 371,122 428,130 415,165 437,160 465,155 525,125 535,160 550,165 455,148 480,150 500,115 490,120 510,130 530,135 500,140 545,140 519,160 560,130 560,150 606,134 593,120 583,155 369,210 400,215 407,188 606,180 606,222 440,190 475,177 490,160 455,190 490,190 510,195 520,185 530,170 540,185 574,188 565,205 530,215 546,198 440,225 450,200 468,214 461,235 490,210 520,215 505,222 485,240 515,250 499,236 374,250 370,260 360,290 366,273 410,250 417,255 530,250 545,240 570,255 560,265 550,275 480,270 500,265 460,265 520,270 470,285 510,300 603,291 540,290 558,306 527,291 480,290 450,303 330,315 654,255 688,240 722,204 702,228 695,178 714,330 705,356 413,325 384,356 410,350 419,368 440,330 470,330 465,345 447,335 500,310 490,340 520,330 500,355 515,365 505,340 534,351 485,365 470,370 460,385 495,378 510,380 545,375 555,390 540,400 529,393 500,390 480,385 510,400 490,405 515,415 445,395 455,405 420,420 424,430 420,436 490,440 474,434 491,423 531,423 579,423 612,408 500,450 528,456 444,480 508,490 487,483 471,507 425,516 498,548 460,545 489,546 459,563 540,582 470,580 440,585 458,598 490,600 430,610 445,610 455,620 475,630 465,625 417,650 487,648 470,645 459,648 418,675 417,698 465,680 455,700 440,710 474,714 450,725 425,756 447,741";
const markerLayer = document.getElementById("markers");
function mark(list, top) {
  for (const pair of list.split(" ")) {
    const [x, y] = pair.split(",").map(Number);
    node(markerLayer, "circle", { class: "mark-outer", cx: x, cy: y + top, r: 18 });
    node(markerLayer, "circle", { class: "mark-dot", cx: x, cy: y + top, r: 7 });
  }
}
mark(north, 0);
mark(south, 1020);

// type, name, info flag
const layers = [
  ["layer", "113年全臺1218處不安定土砂集水區潛勢圖", 1],
  ["layer", "113年全臺1218處不安定土砂集水區潛勢圖_圖例", 0],
  ["layer", "114年二次災害高風險區(32處)", 1],
  ["layer", "重大土石災情報告", 1],
  ["layer", "地文脆弱度_QPE網格", 1],
  ["layer", "林業及自然保育署暫准租地圖", 0],
  ["layer", "CCTV即時影像(公路局)", 1],
  ["layer", "河川分署遠端監控影像", 1],
  ["folder", "水保署CCTV_3D虛實整合", 0, "3D"],
  ["folder", "區域地質圖", 0],
  ["folder", "地質災害潛勢", 0],
  ["folder", "土石流潛勢溪流", 0],
  ["folder", "大規模崩塌", 0],
  ["open", "不安定土砂潛勢圖", 0],
  ["nested", "114年不安定土砂出流潛勢圖", 0],
  ["nested", "114年不安定土砂出流潛勢圖_圖例", 0],
  ["nested", "殘坡判定整合圖資", 0, "on"],
  ["folder", "事件型崩塌目錄_農村水保署(單位：平方公尺)", 1],
  ["folder", "全臺崩塌地圖層_農村水保署(單位：平方公尺)", 1],
  ["folder", "衛星判釋全島崩塌地圖_林業署(單位：平方公尺)", 1],
  ["folder", "歷史山崩目錄_地礦中心[部分年份非全島區域]", 1],
  ["folder", "易淹水地區上游集水區地質調查(地礦中心)", 1],
  ["folder", "淹水潛勢圖(依不同延時之累積雨量)", 1],
  ["folder", "淹水潛勢圖(依重現期距)", 0]
];
const infoButton = name => `<button class="info" aria-label="${name} 說明"><svg width="20" height="20" viewBox="0 0 20 20"><circle cx="10" cy="10" r="9"/><path d="M10 4v2M10 8v7"/></svg></button>`;
const closed = `<svg class="folder-icon" width="16" height="14" viewBox="0 0 16 14"><path fill="#dba420" d="M1 1h6l2 3H1z"/><path fill="#ffc83d" d="M1 4h7l2-1h5v9H1z"/></svg>`;
const opened = `<svg class="folder-icon" width="16" height="14" viewBox="0 0 16 14"><path fill="#dba420" d="M1 1h5l2 2h6v3H1v6z"/><path fill="#fff3c4" d="M2 5h11v2H2z"/><path fill="#ffc83d" d="M4 6h12l-2 6H1z"/></svg>`;
document.getElementById("layers").innerHTML = layers.map(([type, name, info, extra]) => {
  const tail = info ? infoButton(name) : "";
  if (type === "layer" || type === "nested") {
    return `<li class="layer ${type === "nested" ? "nested" : ""}"><label><input type="checkbox" ${extra === "on" ? "checked" : ""}><span>${name}</span></label>${tail}</li>`;
  }
  const open = type === "open";
  const chevron = open ? "M4 2l5 5-5 5" : "M1 4l5 5 5-5";
  return `<li class="layer"><button class="folder" aria-expanded="${open}"><svg class="chevron" width="12" height="14" viewBox="0 0 12 14"><path d="${chevron}"/></svg>${open ? opened : closed}<span>${name}</span></button>${extra ? `<span class="badge">${extra}</span>` : ""}${tail}</li>`;
}).join("");
```
